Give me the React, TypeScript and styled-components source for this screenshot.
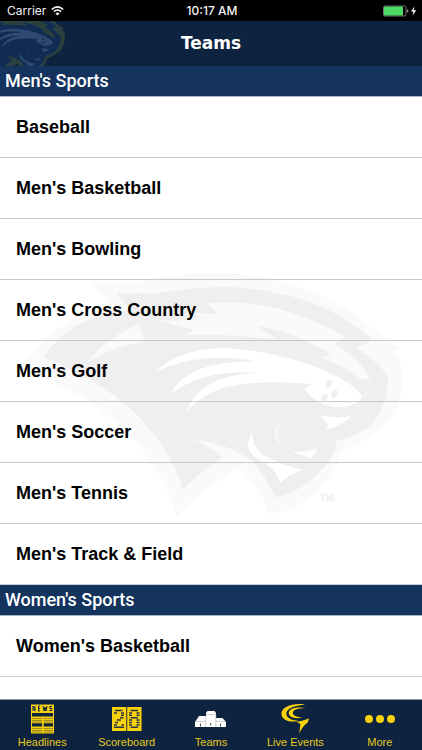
import React from "react";
import styled, { createGlobalStyle } from "styled-components";

const GlobalStyle = createGlobalStyle`
  *, *::before, *::after { box-sizing: border-box; }
  html, body, #root { height: 100%; margin: 0; }
  body { background: #fff; font-family: "Liberation Sans", Arial, sans-serif; }
`;

const Screen = styled.div`
  display: flex;
  flex-direction: column;
  height: 100vh;
  overflow: hidden;
`;

const StatusBar = styled.div`
  display: grid;
  grid-template-columns: 1fr auto 1fr;
  align-items: center;
  flex: none;
  height: 21px;
  padding: 1px 5px 0 7px;
  background: #000;
  color: #f4f4f4;
  font: 400 12px/20px Inter, sans-serif;
`;

const StatusGroup = styled.div<{ $end?: boolean }>`
  display: flex;
  align-items: center;
  gap: 5px;
  justify-content: ${(p) => (p.$end ? "flex-end" : "flex-start")};
`;

const Clock = styled.time`
  font-weight: 500;
`;

const NavBar = styled.header`
  position: relative;
  display: flex;
  align-items: center;
  justify-content: center;
  flex: none;
  height: 45px;
  padding-bottom: 2px;
  overflow: hidden;
  background: #0d2340;
`;

const NavLogo = styled.div`
  position: absolute;
  inset: 0 auto 0 0;
  width: 70px;
  svg { display: block; }
`;

const Title = styled.h1`
  position: relative;
  margin: 0;
  color: #fff;
  font: bold 17px/24px "DejaVu Sans", Verdana, sans-serif;
`;

const Content = styled.main`
  position: relative;
  flex: 1;
  min-height: 0;
  overflow: hidden;
`;

const Watermark = styled.div`
  position: absolute;
  inset: 28px 0 0;
  display: flex;
  align-items: center;
  justify-content: center;
  pointer-events: none;
`;

const Section = styled.section`
  position: relative;
`;

const SectionTitle = styled.h2`
  height: 31px;
  margin: 0;
  padding: 0 5px;
  border-bottom: 1px solid #a9b8cd;
  background: #14345e;
  color: #fff;
  font: 500 18px/29px Roboto, sans-serif;
`;

const TeamList = styled.ul`
  margin: 0;
  padding: 0;
  list-style: none;
  li:last-child a { border-bottom-color: #c3cddb; }
`;

const TeamLink = styled.a`
  display: flex;
  align-items: center;
  height: 61px;
  padding: 0 16px;
  border-bottom: 1px solid #c8c8c8;
  color: #000;
  font-size: 18px;
  font-weight: bold;
  line-height: 24px;
  text-decoration: none;
`;

const TabBar = styled.nav`
  display: grid;
  grid-template-columns: repeat(5, 1fr);
  flex: none;
  height: 51px;
  border-top: 1px solid #8793a3;
  background: #0d2340;
`;

const Tab = styled.button`
  display: flex;
  flex-direction: column;
  align-items: center;
  padding: 4px 0 0;
  border: 0;
  background: none;
  color: #e9c91d;
  font: 11px/16px "Liberation Sans", Arial, sans-serif;
  cursor: pointer;
  svg { display: block; }
`;

type LogoProps = {
  width: number;
  height: number;
  viewBox: string;
  rim: string;
  body: string;
  light: string;
  mark?: boolean;
};

function PantherLogo({ width, height, viewBox, rim, body, light, mark }: LogoProps) {
  return (
    <svg width={width} height={height} viewBox={viewBox} aria-hidden="true">
      <path
        fill={rim}
        d="M270 68Q330 65 385 70Q500 42 640 37Q770 38 905 82Q1030 125 1125 210Q1160 245 1201 262L1181 274Q1210 305 1208 350Q1207 445 1150 500Q1090 548 1020 575Q1017 600 1006 620Q970 690 905 730Q855 758 805 760L788 715Q760 660 720 625Q630 665 530 770Q500 660 430 570Q350 475 250 410Q160 360 62 325Q115 245 200 185Q260 145 325 125Z"
      />
      <path
        fill={body}
        d="M350 98Q430 97 485 98Q580 78 690 80Q810 85 920 122Q1030 160 1117 238L1070 264Q1150 315 1165 355Q1158 455 1105 500Q1060 532 1010 541Q1005 590 970 622Q905 697 824 711Q805 655 755 602Q690 550 580 539Q630 555 667 592Q600 632 548 690Q530 600 435 490Q335 375 130 290Q195 198 300 165Q340 151 390 148Z"
      />
      <path
        fill={rim}
        d="M623 130Q740 118 850 150Q950 178 1033 228L1003 250Q1080 295 1110 355L1080 358Q1040 320 970 293L993 282Q890 218 770 195L828 237Q680 220 550 225L582 208Q510 192 475 178Q535 185 610 174L576 157L652 162Z"
      />
      <path fill={rim} d="M258 308Q325 228 415 192L435 243Q335 260 258 308Z" />
      <path
        fill={light}
        d="M465 335Q540 262 680 263Q840 275 960 325Q1060 365 1087 410Q1070 440 1010 441Q940 430 913 385L935 371Q760 355 660 386Q600 407 560 455Q595 345 770 338Q620 325 512 400Q565 300 770 303Q600 270 465 335Z"
      />
      <g fill={body}>
        <ellipse cx="986" cy="370" rx="9" ry="13" transform="rotate(35 986 370)" />
        <ellipse cx="1004" cy="400" rx="9" ry="12" transform="rotate(35 1004 400)" />
        <ellipse cx="973" cy="411" rx="9" ry="12" transform="rotate(35 973 411)" />
      </g>
      <path
        fill={light}
        d="M961 463Q1000 476 1055 467Q1030 495 978 507L983 492ZM757 515Q758 570 800 590Q845 615 907 628Q860 644 840 669Q832 635 795 607Q742 585 744 548ZM872 575Q915 577 953 562L936 595Q905 580 872 575Z"
      />
      <path fill={rim} fillOpacity=".6" d="M860 472Q790 510 850 563Q815 515 860 472Z" />
      {mark && (
        <text x="959" y="726" fill={body} fontFamily="Liberation Sans, Arial, sans-serif" fontWeight="bold" fontSize="30">
          TM
        </text>
      )}
    </svg>
  );
}

const Wifi = () => (
  <svg width="13" height="10" viewBox="0 0 13 10" fill="none" stroke="#fff" strokeWidth="1.6" aria-hidden="true">
    <path d="M.8 3.5Q6.500-1.700 12.200 3.500M2.900 5.600Q6.500 2.400 10.100 5.600" />
    <path d="M6.500 9.500 4.500 7.400Q6.500 5.700 8.500 7.400Z" fill="#fff" stroke="none" />
  </svg>
);

const Battery = () => (
  <svg width="34" height="12" viewBox="0 0 34 12" aria-hidden="true">
    <rect x=".5" y="1" width="22.500" height="10" rx="1.500" fill="none" stroke="#777" />
    <rect x="1" y="1.500" width="19" height="9" rx="1" fill="#4cd964" />
    <path d="M24 4.200Q25.500 5 25.500 6T24 7.800Z" fill="#999" />
    <path d="M31.500 1.500 28 6.600H30.400L29.500 10.500 33.200 5.200H30.700Z" fill="#fff" />
  </svg>
);

const HeadlinesIcon = () => (
  <svg width="23" height="30" viewBox="0 0 23 30" aria-hidden="true">
    <path fill="#f5cf12" d="M0 .5H23V29.500H0Z" />
    <g fill="none" stroke="#0d2340" strokeWidth="1">
      <path d="M2 7V2L4 7V2M9 2H7.500V7H9M7.500 4.500H9M12 2 13 7 14 3 15 7 16 2M21 2.500H18.900V4.500H20.800V6.500H18.500" />
    </g>
    <path fill="#0d2340" d="M1 9H22V12.500H1ZM1 19.200H11V22.500H1ZM12.500 19.200H22V22.500H12.500Z" />
    <path stroke="#8e7c23" strokeWidth=".8" d="M1 14.500H22M1 16.500H11M12.500 16.500H22M1 18H11M12.500 18H22M1 24.500H11M12.500 24.500H22M1 26.500H11M12.500 26.500H22M1 28H11M12.500 28H22" />
    <path stroke="#f5cf12" strokeWidth="1.200" d="M11.700 13.500V29" />
  </svg>
);

const ScoreboardIcon = () => (
  <svg width="30" height="30" viewBox="0 0 30 30" aria-hidden="true">
    <path fill="#f9d20a" d="M0 3H14.300V27H0ZM15.200 3H29.500V27H15.200Z" />
    <g fill="none" stroke="#28344a" strokeWidth="1.500">
      <path d="M3 6.500H10.500M2 8.900H5M9 8.900H12M9 11.300H12M8 13.700H11.500M5 16.100H9M3 18.500H6M2 20.900H5M9.500 20.900H12M2 23.300H12" />
      <path d="M18.500 6.500H26M17 8.900H20M24.500 8.900H27.500M17 11.300H20M24.500 11.300H27.500M18.500 13.700H26M17 16.100H20M24.500 16.100H27.500M17 18.500H20M24.500 18.500H27.500M17 20.900H20M24.500 20.900H27.500M18.500 23.300H26" />
    </g>
  </svg>
);

const TeamsIcon = () => (
  <svg width="31" height="30" viewBox="0 0 31 30" aria-hidden="true">
    <path fill="#fff" d="M0 18 4 12H11V9L12.500 7H19.500L21 9V14H27.500L31 18V23H0Z" />
    <path fill="none" stroke="#a9b1be" strokeWidth=".6" d="M1 17.500H10.500V23M10.500 17.500 11 12M11 10.500H20.800V23M21 17.500H30" />
    <path stroke="#3c4b64" strokeWidth="1" d="M5.500 19.500V22.500M15.700 19V21.500M25.500 19.500V22.500" />
  </svg>
);

const LiveIcon = () => (
  <svg width="29" height="30" viewBox="0 0 29 31" aria-hidden="true">
    <g fill="#f9d20a">
      <path d="M24.500.5C12-1.500 0 3 0 10C0 16 8 20 17.500 17.200C10 17 4.800 14 5 9.500C5.300 5 13 1.500 24.500.5Z" />
      <path d="M24.500 4.200C15 2.500 7.500 5 7.500 9.300C7.500 13.500 14 16.300 22 13.700C16 13.500 11.300 11.800 11.800 8.700C12.300 6 17 4.500 24.500 4.200Z" />
      <path d="M15 18.300Q21 18 28.500 15L27 19.500Q22 22.500 18.500 30.500L19.500 20.800Q18 19 15 18.300Z" />
    </g>
  </svg>
);

const MoreIcon = () => (
  <svg width="30" height="30" viewBox="0 0 30 30" fill="#f9d20a" aria-hidden="true">
    <circle cx="4" cy="15" r="4" />
    <circle cx="15" cy="15" r="4" />
    <circle cx="26" cy="15" r="4" />
  </svg>
);

const sections = [
  {
    title: "Men's Sports",
    teams: [
      "Baseball",
      "Men's Basketball",
      "Men's Bowling",
      "Men's Cross Country",
      "Men's Golf",
      "Men's Soccer",
      "Men's Tennis",
      "Men's Track & Field",
    ],
  },
  { title: "Women's Sports", teams: ["Women's Basketball"] },
];

const tabs = [
  { label: "Headlines", Icon: HeadlinesIcon },
  { label: "Scoreboard", Icon: ScoreboardIcon },
  { label: "Teams", Icon: TeamsIcon },
  { label: "Live Events", Icon: LiveIcon },
  { label: "More", Icon: MoreIcon },
];

export default function App() {
  return (
    <Screen>
      <GlobalStyle />
      <StatusBar>
        <StatusGroup>
          Carrier <Wifi />
        </StatusGroup>
        <Clock>10:17 AM</Clock>
        <StatusGroup $end>
          <Battery />
        </StatusGroup>
      </StatusBar>
      <NavBar>
        <NavLogo>
          <PantherLogo width={70} height={45} viewBox="540 185 720 463" rim="#2c4040" body="#102c52" light="#2f4a70" />
        </NavLogo>
        <Title>Teams</Title>
      </NavBar>
      <Content>
        <Watermark>
          <PantherLogo width={390} height={250} viewBox="48 35 1170 750" rim="#fafafa" body="#efefef" light="#ffffff" mark />
        </Watermark>
        {sections.map((section) => (
          <Section key={section.title}>
            <SectionTitle>{section.title}</SectionTitle>
            <TeamList>
              {section.teams.map((team) => (
                <li key={team}>
                  <TeamLink href="#">{team}</TeamLink>
                </li>
              ))}
            </TeamList>
          </Section>
        ))}
      </Content>
      <TabBar>
        {tabs.map(({ label, Icon }) => (
          <Tab key={label} type="button" aria-current={label === "Teams" ? "page" : undefined}>
            <Icon />
            {label}
          </Tab>
        ))}
      </TabBar>
    </Screen>
  );
}
